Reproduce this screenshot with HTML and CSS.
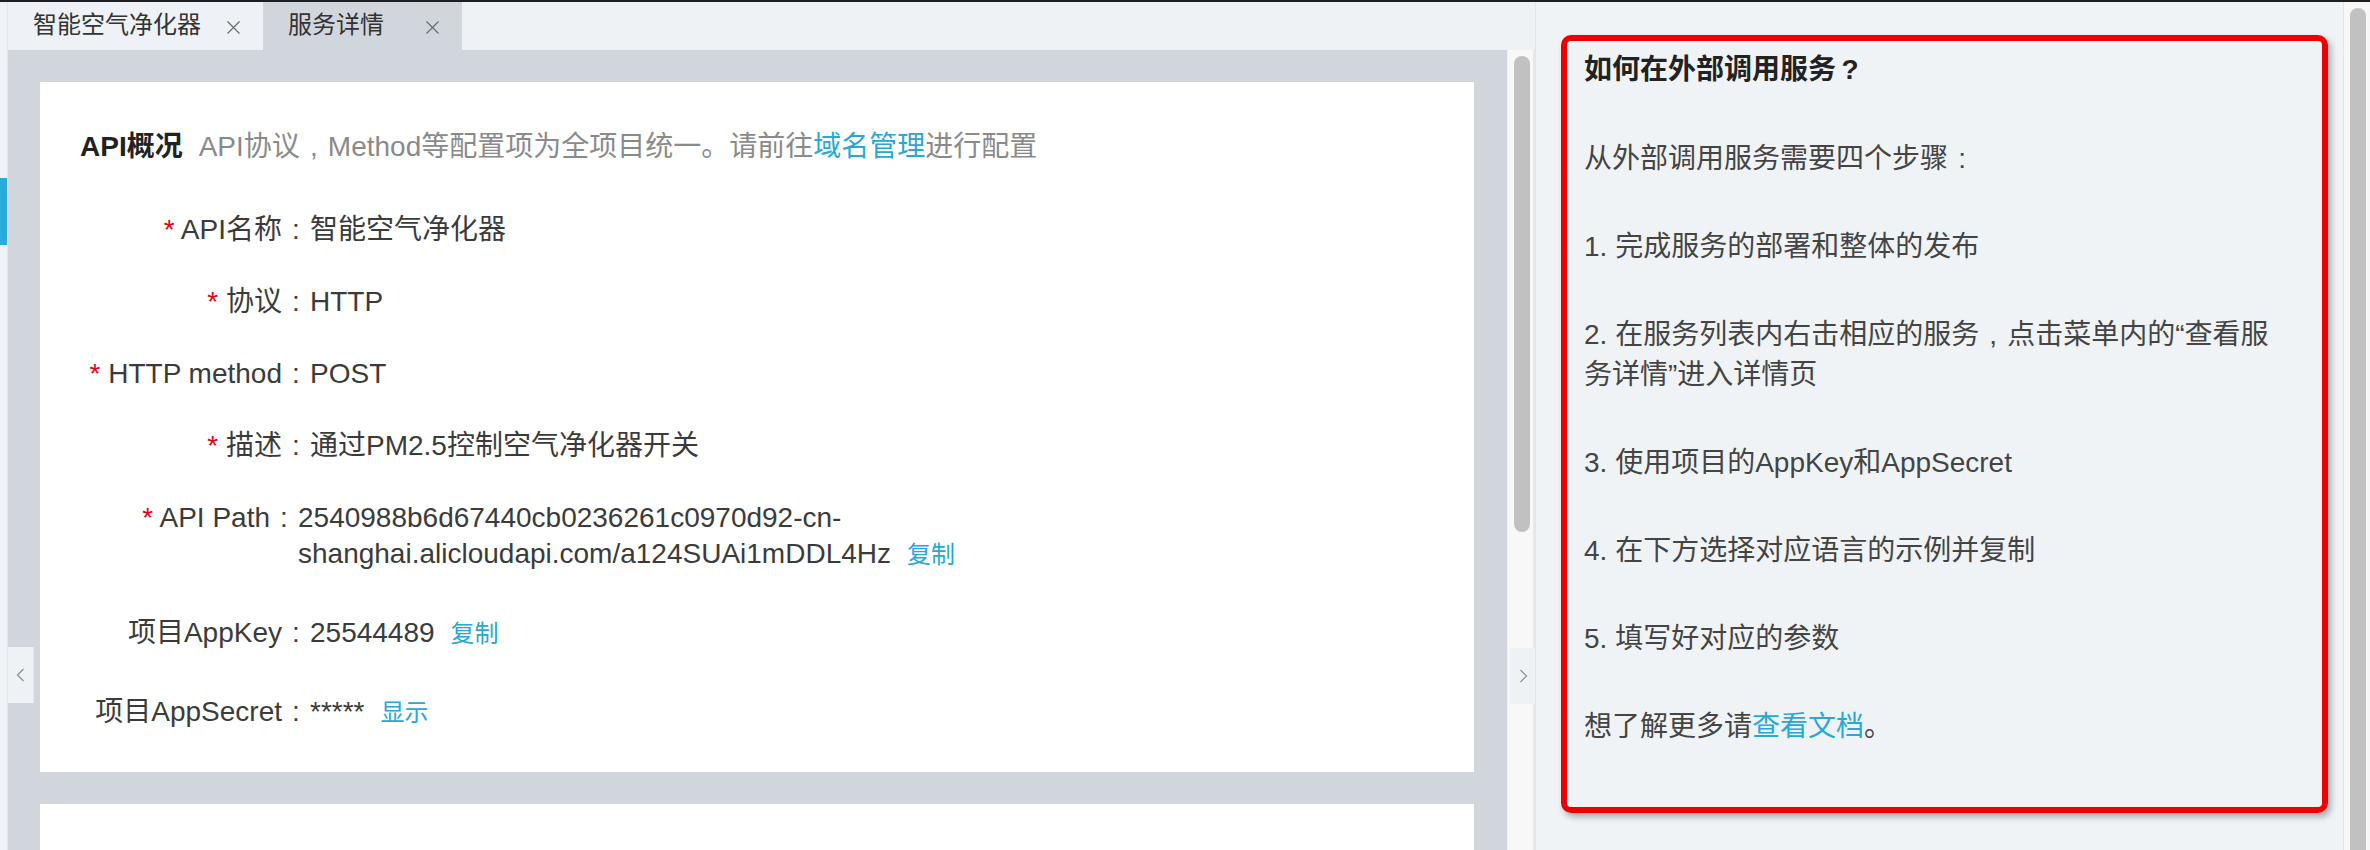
FILE: index.html
```html
<!DOCTYPE html>
<html lang="zh-CN">
<head>
<meta charset="utf-8">
<title>服务详情</title>
<link rel="stylesheet" href="styles.css">
</head>
<body>
<div class="topbar"></div>
<div class="main">
  <aside class="sidebar"><div class="sidebar-active"></div></aside>

  <section class="workspace">
    <nav class="tabbar">
      <div class="tab">
        <span class="tab-title">智能空气净化器</span>
        <svg class="tab-close" width="13" height="13" viewBox="0 0 13 13"><path d="M0.5 0.5L12.5 12.5M12.5 0.5L0.5 12.5" stroke="#6b6b6b" stroke-width="1.2" fill="none"/></svg>
      </div>
      <div class="tab tab-active">
        <span class="tab-title">服务详情</span>
        <svg class="tab-close" width="13" height="13" viewBox="0 0 13 13"><path d="M0.5 0.5L12.5 12.5M12.5 0.5L0.5 12.5" stroke="#6b6b6b" stroke-width="1.2" fill="none"/></svg>
      </div>
    </nav>

    <div class="content-area">
      <div class="scroll-content">
        <div class="card">
          <h2 class="card-title"><b>API概况</b><span class="card-sub">API协议<span class="fw">,</span>Method等配置项为全项目统一。请前往<a class="link">域名管理</a>进行配置</span></h2>

          <div class="fields">
            <div class="field">
              <div class="label"><span class="req">*</span> API名称<span class="fw">:</span></div>
              <div class="value">智能空气净化器</div>
            </div>
            <div class="field">
              <div class="label"><span class="req">*</span> 协议<span class="fw">:</span></div>
              <div class="value">HTTP</div>
            </div>
            <div class="field">
              <div class="label"><span class="req">*</span> HTTP method<span class="fw">:</span></div>
              <div class="value">POST</div>
            </div>
            <div class="field">
              <div class="label"><span class="req">*</span> 描述<span class="fw">:</span></div>
              <div class="value">通过PM2.5控制空气净化器开关</div>
            </div>
            <div class="field field-path">
              <div class="label"><span class="req">*</span> API Path<span class="fw">:</span></div>
              <div class="value value-path">2540988b6d67440cb0236261c0970d92-cn-shanghai.alicloudapi.com/a124SUAi1mDDL4Hz<a class="link link-small">复制</a></div>
            </div>
            <div class="field field-plain">
              <div class="label">项目AppKey<span class="fw">:</span></div>
              <div class="value">25544489<a class="link link-small">复制</a></div>
            </div>
            <div class="field field-plain">
              <div class="label">项目AppSecret<span class="fw">:</span></div>
              <div class="value">*****<a class="link link-small">显示</a></div>
            </div>
          </div>
        </div>
        <div class="card card-next"></div>
      </div>

      <div class="scrollbar"><div class="thumb"></div></div>

      <div class="handle handle-left">
        <svg width="9" height="14" viewBox="0 0 9 14"><path d="M7.5 1L1.5 7L7.5 13" stroke="#8c8c8c" stroke-width="1.2" fill="none"/></svg>
      </div>
      <div class="handle handle-right">
        <svg width="9" height="14" viewBox="0 0 9 14"><path d="M1.5 1L7.5 7L1.5 13" stroke="#8c8c8c" stroke-width="1.2" fill="none"/></svg>
      </div>
    </div>
  </section>

  <aside class="panel">
    <div class="help-box">
      <h3 class="help-title">如何在外部调用服务<span class="fw">?</span></h3>
      <p>从外部调用服务需要四个步骤<span class="fw">:</span></p>
      <p>1. 完成服务的部署和整体的发布</p>
      <p>2. 在服务列表内右击相应的服务<span class="fw">,</span>点击菜单内的“查看服务详情”进入详情页</p>
      <p>3. 使用项目的AppKey和AppSecret</p>
      <p>4. 在下方选择对应语言的示例并复制</p>
      <p>5. 填写好对应的参数</p>
      <p>想了解更多请<a class="link">查看文档</a>。</p>
    </div>
  </aside>

  <div class="panel-scroll"><div class="thumb thumb-long"></div></div>
</div>
</body>
</html>
```

FILE: styles.css
```css
* { box-sizing: border-box; }

html, body {
  margin: 0;
  padding: 0;
}

body {
  width: 2370px;
  height: 850px;
  overflow: hidden;
  font-family: "Liberation Sans", "Noto Sans CJK SC", sans-serif;
  color: #333;
  background: #eff2f5;
}

/* full-width cell with centred punctuation, as in the reference */
.fw {
  display: inline-block;
  width: 1em;
  text-align: center;
}

.topbar {
  height: 2px;
  background: #1d1e22;
}

.main {
  display: flex;
  height: 848px;
}

/* left sidebar edge */
.sidebar {
  width: 8px;
  flex-shrink: 0;
  background: #eef1f5;
  border-right: 1px solid #e2e6ea;
}
.sidebar-active {
  margin-top: 176px;
  height: 67px;
  width: 7px;
  background: #29acd9;
}

/* workspace */
.workspace {
  width: 1527px;
  flex-shrink: 0;
  display: flex;
  flex-direction: column;
}

.tabbar {
  height: 48px;
  display: flex;
  background: #eff2f5;
}
.tab {
  display: flex;
  align-items: center;
  justify-content: space-between;
  min-width: 199px;
  padding: 0 23px 0 25px;
  background: #eef1f5;
  font-size: 24px;
  color: #333;
}
.tab-active {
  background: #d1d6dd;
}
.tab-title {
  line-height: 48px;
  margin-right: 26px;
  padding-bottom: 2px;
}
.tab-close {
  display: block;
  margin-top: 2px;
}

.content-area {
  position: relative;
  flex: 1;
  display: flex;
  overflow: hidden;
}
.scroll-content {
  width: 1499px;
  flex-shrink: 0;
  background: #d1d6dd;
  padding: 32px 33px 0 32px;
  overflow: hidden;
}
.scrollbar {
  width: 28px;
  flex-shrink: 0;
  background: #f8f8f8;
  border-left: 1px solid #efefef;
  border-right: 2px solid #e6e8eb;
  padding: 6px 0 0 6px;
}
.thumb {
  width: 16px;
  height: 476px;
  border-radius: 8px;
  background: #c1c1c1;
}

.card {
  background: #fff;
  padding: 45px 40px 41px;
}
.card-next {
  margin-top: 32px;
  height: 300px;
}

.card-title {
  margin: 0;
  font-size: 28px;
  line-height: 40px;
  font-weight: normal;
  color: #222;
  white-space: nowrap;
}
.card-title b {
  font-weight: bold;
}
.card-sub {
  margin-left: 16px;
  color: #8a8a8a;
}

.link {
  color: #27a8d6;
  text-decoration: none;
  cursor: pointer;
}
.link-small {
  font-size: 24px;
  margin-left: 16px;
  white-space: nowrap;
}

.fields {
  margin-top: 45px;
  font-size: 28px;
  line-height: 36px;
  color: #3b3b3b;
}
.field {
  display: flex;
  margin-top: 36px;
}
.field:first-child {
  margin-top: 0;
}
.field-plain {
  margin-top: 42px;
}
.label {
  width: 230px;
  flex-shrink: 0;
  text-align: right;
  white-space: nowrap;
}
.field-path .label {
  width: 218px;
}
.req {
  color: #e60012;
}
.value {
  max-width: 690px;
}

/* collapse handles (overlay) */
.handle {
  position: absolute;
  width: 26px;
  height: 56px;
  display: flex;
  align-items: center;
  justify-content: center;
  background: #eff2f5;
}
.handle-left {
  left: 0;
  top: 597px;
  border-right: 1px solid #e4e7eb;
}
.handle-right {
  left: 1502px;
  top: 598px;
}

/* right help panel */
.panel {
  width: 808px;
  flex-shrink: 0;
  background: #f0f3f6;
  border-left: 1px solid #e1e4e8;
  padding: 33px 0 0 25px;
}
.help-box {
  width: 767px;
  height: 778px;
  border: 6px solid #ee0000;
  border-radius: 10px;
  box-shadow: 3px 4px 6px rgba(0, 0, 0, 0.3);
  padding: 9px 0 0 17px;
  font-size: 28px;
  line-height: 40px;
  color: #444;
}
.help-title {
  margin: 0 0 49px;
  font-size: 28px;
  line-height: 40px;
  font-weight: bold;
  color: #222;
}
.help-box p {
  margin: 0 0 48px;
  width: 700px;
}

.panel-scroll {
  width: 27px;
  flex-shrink: 0;
  background: #f7f7f7;
  border-left: 1px solid #e4e4e4;
  padding: 6px 0 0 6px;
}
.thumb-long {
  height: 860px;
}
```
